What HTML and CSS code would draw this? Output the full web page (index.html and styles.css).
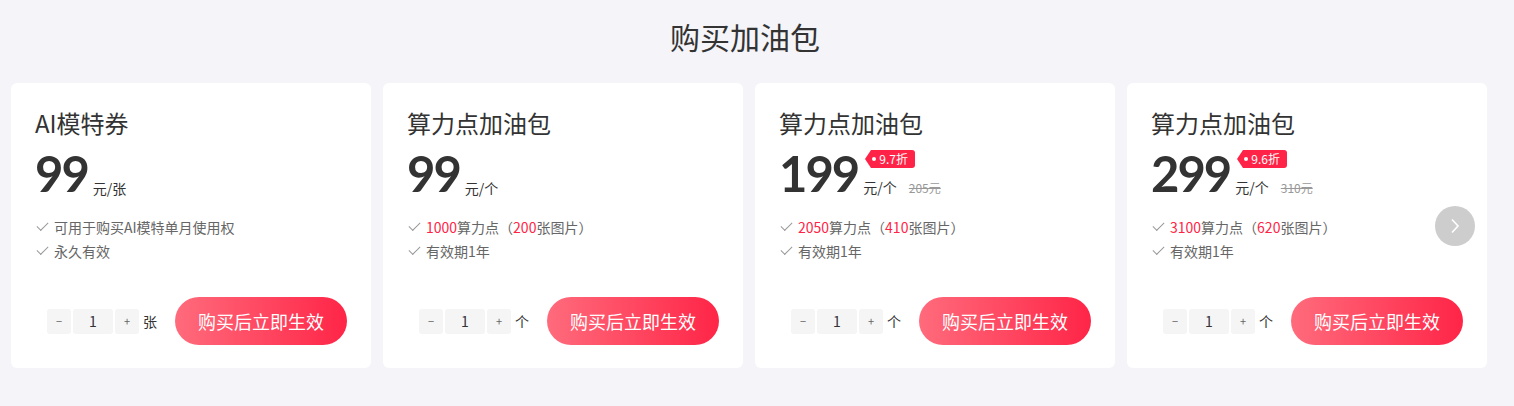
FILE: index.html
```html
<!DOCTYPE html>
<html lang="zh-CN">
<head>
  <meta charset="UTF-8">
  <title>购买加油包</title>
  <link rel="stylesheet" href="styles.css">
</head>
<body>
  <h1 class="page-title">购买加油包</h1>

  <div class="cards">
    <div class="card">
      <div class="card-title">AI模特券</div>
      <div class="price-row">
        <span class="price">99</span>
        <div class="price-side">
          <div class="unit">元/张</div>
        </div>
      </div>
      <ul class="features">
        <li><i class="check"></i>可用于购买AI模特单月使用权</li>
        <li><i class="check"></i>永久有效</li>
      </ul>
      <div class="buy-row">
        <div class="stepper">
          <span class="step-btn">−</span>
          <span class="step-num">1</span>
          <span class="step-btn">+</span>
          <span class="step-unit">张</span>
        </div>
        <button class="buy-btn">购买后立即生效</button>
      </div>
    </div>

    <div class="card">
      <div class="card-title">算力点加油包</div>
      <div class="price-row">
        <span class="price">99</span>
        <div class="price-side">
          <div class="unit">元/个</div>
        </div>
      </div>
      <ul class="features">
        <li><i class="check"></i><em>1000</em>算力点（<em>200</em>张图片）</li>
        <li><i class="check"></i>有效期1年</li>
      </ul>
      <div class="buy-row">
        <div class="stepper">
          <span class="step-btn">−</span>
          <span class="step-num">1</span>
          <span class="step-btn">+</span>
          <span class="step-unit">个</span>
        </div>
        <button class="buy-btn">购买后立即生效</button>
      </div>
    </div>

    <div class="card">
      <div class="card-title">算力点加油包</div>
      <div class="price-row">
        <span class="price">199</span>
        <div class="price-side">
          <span class="discount">9.7折</span>
          <div class="unit">元/个<s class="origin">205元</s></div>
        </div>
      </div>
      <ul class="features">
        <li><i class="check"></i><em>2050</em>算力点（<em>410</em>张图片）</li>
        <li><i class="check"></i>有效期1年</li>
      </ul>
      <div class="buy-row">
        <div class="stepper">
          <span class="step-btn">−</span>
          <span class="step-num">1</span>
          <span class="step-btn">+</span>
          <span class="step-unit">个</span>
        </div>
        <button class="buy-btn">购买后立即生效</button>
      </div>
    </div>

    <div class="card">
      <div class="card-title">算力点加油包</div>
      <div class="price-row">
        <span class="price">299</span>
        <div class="price-side">
          <span class="discount">9.6折</span>
          <div class="unit">元/个<s class="origin">310元</s></div>
        </div>
      </div>
      <ul class="features">
        <li><i class="check"></i><em>3100</em>算力点（<em>620</em>张图片）</li>
        <li><i class="check"></i>有效期1年</li>
      </ul>
      <div class="buy-row">
        <div class="stepper">
          <span class="step-btn">−</span>
          <span class="step-num">1</span>
          <span class="step-btn">+</span>
          <span class="step-unit">个</span>
        </div>
        <button class="buy-btn">购买后立即生效</button>
      </div>
      <span class="next-arrow">
        <svg width="12" height="16" viewBox="0 0 12 16"><path d="M3 1.5 L9 8 L3 14.5" fill="none" stroke="#fff" stroke-width="1.6"/></svg>
      </span>
    </div>
  </div>
</body>
</html>
```

FILE: styles.css
```css
body, html {
    margin: 0;
    padding: 0;
    background-color: #f4f4f9;
    color: #333;
    font-family: "Noto Sans CJK SC", "Noto Sans", sans-serif;
}

.page-title {
    margin: 0;
    padding-top: 14px;
    height: 83px;
    box-sizing: border-box;
    text-align: center;
    font-size: 30px;
    font-weight: normal;
    line-height: 44px;
    color: #333;
    padding-right: 24px;
}

.cards {
    display: flex;
    gap: 12px;
    padding-left: 11px;
}

.card {
    position: relative;
    width: 360px;
    height: 285px;
    box-sizing: border-box;
    padding: 24px 24px 23px 24px;
    background-color: #fff;
    border-radius: 6px;
    display: flex;
    flex-direction: column;
}

.card-title {
    font-size: 24px;
    line-height: 32px;
    color: #333;
}

.price-row {
    display: flex;
    align-items: flex-end;
    margin-top: 9px;
    height: 50px;
}

.price {
    font-family: Lato, sans-serif;
    font-weight: bold;
    font-size: 49px;
    line-height: 50px;
    color: #333;
    letter-spacing: -2px;
}

.price-side {
    display: flex;
    flex-direction: column;
    align-items: flex-start;
    margin-left: 5px;
    padding-bottom: 1px;
}

.unit {
    font-size: 14px;
    line-height: 18px;
    color: #333;
}

.origin {
    font-size: 12px;
    color: #999;
    margin-left: 12px;
}

.discount {
    position: relative;
    margin: 0 0 10px 8px;
    height: 18px;
    line-height: 18px;
    padding: 0 7px 0 8px;
    background-color: #ff2447;
    color: #fff;
    font-size: 12px;
    border-radius: 0 3px 3px 0;
}

.discount::before {
    content: "";
    position: absolute;
    left: -6px;
    top: 0;
    border-top: 9px solid transparent;
    border-bottom: 9px solid transparent;
    border-right: 6px solid #ff2447;
}

.discount::after {
    content: "";
    position: absolute;
    left: 1px;
    top: 7px;
    width: 4px;
    height: 4px;
    border-radius: 50%;
    background-color: #fff;
}

.features {
    list-style: none;
    margin: 17px 0 0 0;
    padding: 0;
}

.features li {
    font-size: 14px;
    line-height: 24px;
    color: #666;
    display: flex;
    align-items: center;
}

.features em {
    font-style: normal;
    color: #ff2447;
}

.check {
    display: inline-block;
    width: 10px;
    height: 5px;
    border-left: 1px solid #999;
    border-bottom: 1px solid #999;
    transform: rotate(-45deg);
    margin: 0 6px 4px 2px;
}

.buy-row {
    margin-top: auto;
    display: flex;
    align-items: center;
    justify-content: flex-end;
    gap: 18px;
}

.stepper {
    display: flex;
    align-items: center;
    gap: 2px;
}

.step-btn, .step-num {
    height: 25px;
    line-height: 25px;
    text-align: center;
    background-color: #f5f5f5;
    border-radius: 3px;
    color: #666;
    font-size: 11px;
}

.step-btn {
    width: 24px;
}

.step-num {
    width: 40px;
    font-size: 14px;
    color: #333;
}

.step-unit {
    margin-left: 2px;
    font-size: 14px;
    color: #333;
}

.buy-btn {
    width: 172px;
    height: 48px;
    border: none;
    border-radius: 24px;
    background: linear-gradient(90deg, #ff6b7c, #ff2547);
    color: #fff;
    font-family: "Noto Sans CJK SC", sans-serif;
    font-size: 18px;
    padding: 0;
}

.next-arrow {
    position: absolute;
    right: 12px;
    top: 123px;
    width: 40px;
    height: 40px;
    border-radius: 50%;
    background-color: #cdcdcd;
    display: flex;
    align-items: center;
    justify-content: center;
}
```
